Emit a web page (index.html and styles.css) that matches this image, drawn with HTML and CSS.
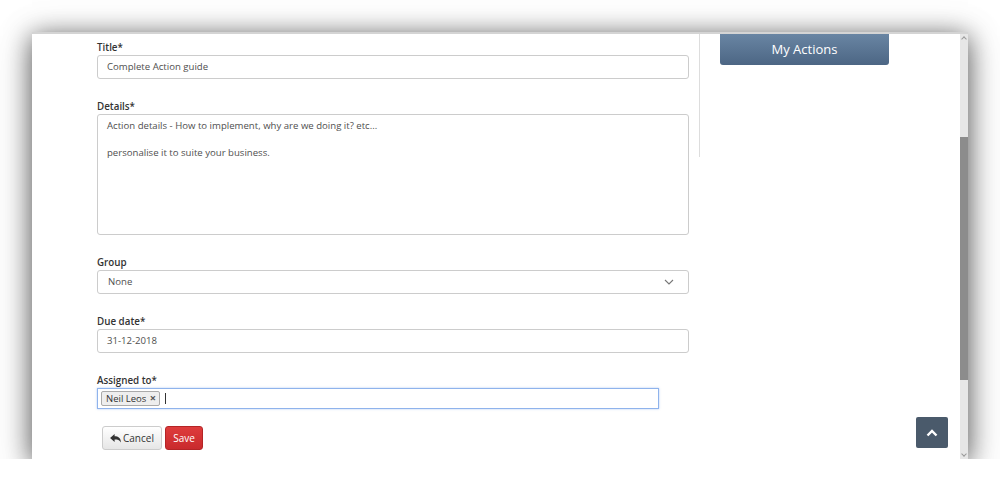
FILE: index.html
```html
<!DOCTYPE html>
<html>
<head>
<meta charset="utf-8">
<link rel="stylesheet" href="styles.css">
</head>
<body>
<div class="window">
  <div class="viewport">
    <div class="form">
      <div class="field">
        <label class="lbl">Title*</label>
        <div class="input">Complete Action guide</div>
      </div>
      <div class="field">
        <label class="lbl">Details*</label>
        <div class="input textarea">
          <p>Action details - How to implement, why are we doing it? etc...</p>
          <p class="gap">personalise it to suite your business.</p>
        </div>
      </div>
      <div class="field">
        <label class="lbl">Group</label>
        <div class="input select">
          <span>None</span>
          <svg class="chev" width="10" height="6" viewBox="0 0 10 6"><path d="M1 1 L5 5 L9 1" fill="none" stroke="#777" stroke-width="1.1"/></svg>
        </div>
      </div>
      <div class="field">
        <label class="lbl">Due date*</label>
        <div class="input">31-12-2018</div>
      </div>
      <div class="field">
        <label class="lbl">Assigned to*</label>
        <div class="input tags">
          <span class="tag">Neil Leos <b>×</b></span>
          <span class="caret"></span>
        </div>
      </div>
      <div class="buttons">
        <button class="btn cancel"><svg width="11" height="9" viewBox="0 0 12 10"><path d="M0 4.5 L5 0 V2.6 C9 2.6 12 4.5 12 9.5 C10.5 6.8 8.5 6.2 5 6.2 V9 Z" fill="#333"/></svg>Cancel</button>
        <button class="btn save">Save</button>
      </div>
    </div>
    <div class="side">
      <div class="divider"></div>
      <div class="myactions">My Actions</div>
    </div>
    <a class="totop"><svg width="12" height="8" viewBox="0 0 12 8"><path d="M1.5 6.5 L6 2 L10.5 6.5" fill="none" stroke="#fff" stroke-width="2.4"/></svg></a>
  </div>
  <div class="scrollbar">
    <div class="arrow up"></div>
    <div class="track"><div class="thumb"></div></div>
    <div class="arrow down"></div>
  </div>
</div>
</body>
</html>
```

FILE: styles.css
```css
html, body {
  margin: 0;
  padding: 0;
  background: #fff;
}
body {
  padding: 32px 0 0 32px;
  font-family: "Open Sans", "Liberation Sans", sans-serif;
  color: #333;
}
.window {
  width: 936px;
  height: 427px;
  display: flex;
  background: #fff;
  border-top: 2px solid #d4d4d4;
  box-sizing: border-box;
  box-shadow: 0 4px 24px rgba(0,0,0,0.55), 0 8px 36px rgba(0,0,0,0.25);
}
.viewport {
  flex: 1;
  display: flex;
  position: relative;
  overflow: hidden;
}
.form {
  width: 592px;
  padding: 7px 0 0 65px;
}
.field {
  display: flex;
  flex-direction: column;
  gap: 1px;
  margin-bottom: 21px;
}
.lbl {
  display: block;
  font-size: 9.8px;
  font-weight: 600;
  line-height: 13px;
  height: 13px;
  color: #333;
}
.input {
  height: 24px;
  box-sizing: border-box;
  border: 1px solid #ccc;
  border-radius: 3px;
  padding: 0 9px;
  font-size: 9.6px;
  line-height: 22px;
  color: #4f4f4f;
}
.textarea {
  height: 121px;
  padding-top: 4px;
  line-height: 13px;
}
.textarea p {
  margin: 0;
}
.textarea p.gap {
  margin-top: 14px;
}
.select {
  display: flex;
  justify-content: space-between;
  align-items: center;
  padding-right: 14px;
}
.select span { padding-left: 1px; }
.tags {
  width: 562px;
  height: 21px;
  border: 1px solid #8fb3ec;
  border-radius: 0;
  box-shadow: 0 0 2px rgba(100,150,230,0.5);
  padding: 0 3px;
  display: flex;
  align-items: center;
  gap: 5px;
}
.tag {
  display: inline-block;
  background: #eee;
  border: 1px solid #aaa;
  border-radius: 2px;
  font-size: 9.5px;
  line-height: 12px;
  padding: 0 3px 0 4px;
  color: #333;
}
.tag b {
  color: #555;
  font-weight: 700;
  font-size: 11px;
  margin-left: 1px;
}
.caret {
  width: 1px;
  height: 11px;
  background: #333;
}
.buttons {
  margin-top: -4px;
  padding-left: 5px;
  display: flex;
  gap: 3px;
}
.btn {
  height: 24px;
  border-radius: 3px;
  font-family: "Open Sans", "Liberation Sans", sans-serif;
  font-size: 10px;
  padding: 0 7px;
  display: flex;
  align-items: center;
  gap: 2px;
  cursor: pointer;
}
.cancel {
  width: 60px;
  background: linear-gradient(#fff, #e6e6e6);
  border: 1px solid #ccc;
  color: #333;
}
.save {
  width: 38px;
  justify-content: center;
  background: linear-gradient(#de3c3c, #c92a2d);
  border: 1px solid #b42426;
  color: #fff;
}
.side {
  display: flex;
  align-items: flex-start;
}
.divider {
  margin-left: 10px;
  width: 1px;
  height: 123px;
  background: #ddd;
}
.myactions {
  margin-left: 20px;
  width: 169px;
  height: 31px;
  box-sizing: border-box;
  background: linear-gradient(#6985a3, #4c6684);
  border-radius: 0 0 3px 3px;
  color: #fff;
  font-size: 13px;
  text-align: center;
  line-height: 31px;
}
.totop {
  position: absolute;
  right: 12px;
  top: 383px;
  width: 32px;
  height: 31px;
  background: #4a5a6b;
  border-radius: 2px;
  display: flex;
  align-items: center;
  justify-content: center;
}
.scrollbar {
  width: 8px;
  display: flex;
  flex-direction: column;
  background: #e6e6e6;
}
.arrow {
  height: 8px;
  position: relative;
}
.arrow::after {
  content: "";
  position: absolute;
  left: 2px;
  width: 3px;
  height: 3px;
  border-left: 1px solid #999;
  border-top: 1px solid #999;
}
.arrow.up::after { top: 3px; transform: rotate(45deg); }
.arrow.down::after { top: 1px; transform: rotate(225deg); }
.track {
  flex: 1;
  padding-top: 95px;
}
.thumb {
  height: 243px;
  background: #8c8c8c;
}
```
